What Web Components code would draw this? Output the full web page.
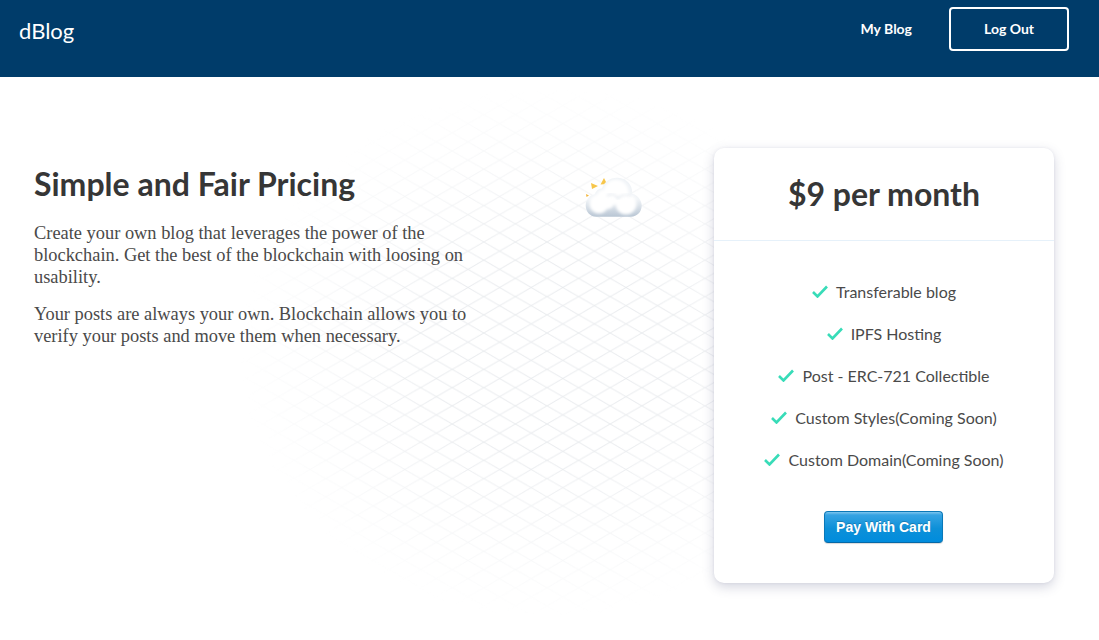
<!DOCTYPE html>
<html lang="en"><head><meta charset="utf-8"><title>dBlog</title>
<style>html,body{margin:0;padding:0;background:#fff;height:100%;overflow:hidden;font-family:Lato,sans-serif;color:#363636}</style>
</head><body>
<app-header></app-header>
<pricing-page>
  <pricing-intro slot="left">
    <p>Create your own blog that leverages the power of the blockchain. Get the best of the blockchain with loosing on usability.</p>
    <p>Your posts are always your own. Blockchain allows you to verify your posts and move them when necessary.</p>
  </pricing-intro>
  <pricing-card slot="right">
    <check-item>Transferable blog</check-item>
    <check-item>IPFS Hosting</check-item>
    <check-item>Post - ERC-721 Collectible</check-item>
    <check-item>Custom Styles(Coming Soon)</check-item>
    <check-item>Custom Domain(Coming Soon)</check-item>
  </pricing-card>
</pricing-page>
<script>
function def(name,html){customElements.define(name,class extends HTMLElement{constructor(){super();this.attachShadow({mode:'open'}).innerHTML=html}})}
def('app-header',`<style>
:host{display:flex;align-items:flex-start;justify-content:space-between;height:77px;background:#003c6a;color:#fff;box-sizing:border-box;padding:7px 30px 0 19px}
.logo{font-size:22px;line-height:48px;color:#fff}
nav{display:flex;align-items:flex-start}
a{font-size:14px;font-weight:700;color:#fff;text-decoration:none}
.my{margin-right:37px;line-height:44px}
.out{box-sizing:border-box;width:120px;height:44px;border:2px solid #fff;border-radius:4px;text-align:center;line-height:40px}
</style><div class="logo">dBlog</div><nav><a class="my">My Blog</a><a class="out">Log Out</a></nav>`);
def('pricing-page',`<style>
:host{display:flex;position:relative;height:563px;box-sizing:border-box;padding:71px 45px 0 34px;justify-content:space-between;align-items:flex-start}
.bg{position:absolute;left:240px;top:10px;width:620px;height:530px;z-index:0;
 -webkit-mask-image:radial-gradient(ellipse 310px 265px at 50% 50%,#000 40%,transparent 100%);mask-image:radial-gradient(ellipse 310px 265px at 50% 50%,#000 40%,transparent 100%)}
.bg svg{display:block;width:100%;height:100%}
.cloud{position:absolute;left:584px;top:99px;z-index:1}
.l,.r{position:relative;z-index:2;display:block}
</style>
<div class="bg"><svg xmlns="http://www.w3.org/2000/svg"><defs><pattern id="g" width="31.6" height="18.2" patternUnits="userSpaceOnUse" x="-9" y="9.4"><path d="M0 0L31.6 18.2M31.6 0L0 18.2" stroke="#e9ebee" stroke-width="1" fill="none"/></pattern></defs><rect width="100%" height="100%" fill="url(#g)"/></svg></div>
<svg class="cloud" width="60" height="42" viewBox="0 0 60 42" xmlns="http://www.w3.org/2000/svg">
<defs>
<linearGradient id="c3" x1="0" y1="0" x2="0" y2="1"><stop offset="0" stop-color="#eef2f6"/><stop offset=".55" stop-color="#f2f5f8"/><stop offset="1" stop-color="#b4c2d1"/></linearGradient>
<filter id="b" x="-20%" y="-20%" width="140%" height="140%"><feGaussianBlur stdDeviation="1.600"/></filter>
<clipPath id="cp"><path id="sil" d="M12 40.700C5.500 40.700 1.700 35 1.700 29.500C1.700 23.500 6 19 10.500 18.500C12 14 15.500 12 18 12.500C20 6 26 1.700 33 1.700C41 1.700 47 7 48 14C48.200 15.500 48.200 16.500 48 17.500C53.500 19 57.700 24 57.700 29.500C57.700 36 53 40.700 47 40.700Z"/></clipPath></defs>
<path d="M7 7L14 10L8 13Z" fill="#f7c64a"/><path d="M20 2L23 8L16.500 8.500Z" fill="#f7c64a"/><path d="M2 18L5 19.500L2.500 21Z" fill="#f3b63c"/>
<g clip-path="url(#cp)">
<rect width="60" height="42" fill="url(#c3)"/>
<g filter="url(#b)" fill="#fff">
<circle cx="32" cy="16" r="12.500"/><circle cx="15" cy="28" r="9.500"/><circle cx="42" cy="28" r="10.500"/><circle cx="23" cy="25" r="8"/><circle cx="19" cy="20" r="6"/>
</g>
<g filter="url(#b)" fill="none" stroke="#d5dde6" stroke-width="1.200" opacity=".8">
<path d="M23 20C26 17 32 18 34 23"/><path d="M34 23C36 19 42 18 47 20"/>
</g>
</g>
</svg>
<div class="l"><slot name="left"></slot></div><div class="r"><slot name="right"></slot></div>`);
def('pricing-intro',`<style>
:host{display:block;width:440px;color:#4a4a4a;font-family:"Liberation Serif",serif}
h1{margin:16px 0 18px;font:700 32px/40px Lato,sans-serif;color:#363636}
::slotted(p){margin:0 0 15px;font-size:18.4px;line-height:22px;color:#4a4a4a}
</style><h1>Simple and Fair Pricing</h1><slot></slot>`);
def('pricing-card',`<style>
:host{display:block;box-sizing:border-box;width:340px;height:435px;background:#fff;border-radius:10px;box-shadow:0 4px 12px rgba(60,66,110,.22),0 0 3px rgba(60,66,110,.08)}
.head{height:92px;border-bottom:1px solid #e6f1fa;display:flex;align-items:center;justify-content:center}
h2{margin:0;font:700 32px/40px Lato,sans-serif;color:#363636}
.list{display:flex;flex-direction:column;gap:14px;padding-top:36px;align-items:center}
.foot{display:flex;justify-content:center;margin-top:38px;padding-right:1px}
button{box-sizing:border-box;width:119px;height:32px;border:1px solid #0a78b8;border-bottom-color:#0668a6;border-radius:4px;background:linear-gradient(#7dc5ee 0,#35a3e3 10%,#0d90d8 55%,#008cdd 100%);color:#fff;font:700 14px/30px "Liberation Sans",sans-serif;padding:0;text-shadow:0 -1px 0 rgba(0,0,0,.2);box-shadow:0 1px 1px rgba(0,0,0,.15)}
</style><div class="head"><h2>$9 per month</h2></div><div class="list"><slot></slot></div><div class="foot"><button>Pay With Card</button></div>`);
def('check-item',`<style>
:host{display:flex;align-items:center;gap:8px;height:28px;font-size:16px;color:#4a4a4a}
svg{display:block}
</style><svg width="16" height="13" viewBox="0 0 16 13" xmlns="http://www.w3.org/2000/svg"><path d="M1 7L5.500 11.500L15 1.500" fill="none" stroke="#38dcb8" stroke-width="2.600"/></svg><span><slot></slot></span>`);
</script>
</body></html>
